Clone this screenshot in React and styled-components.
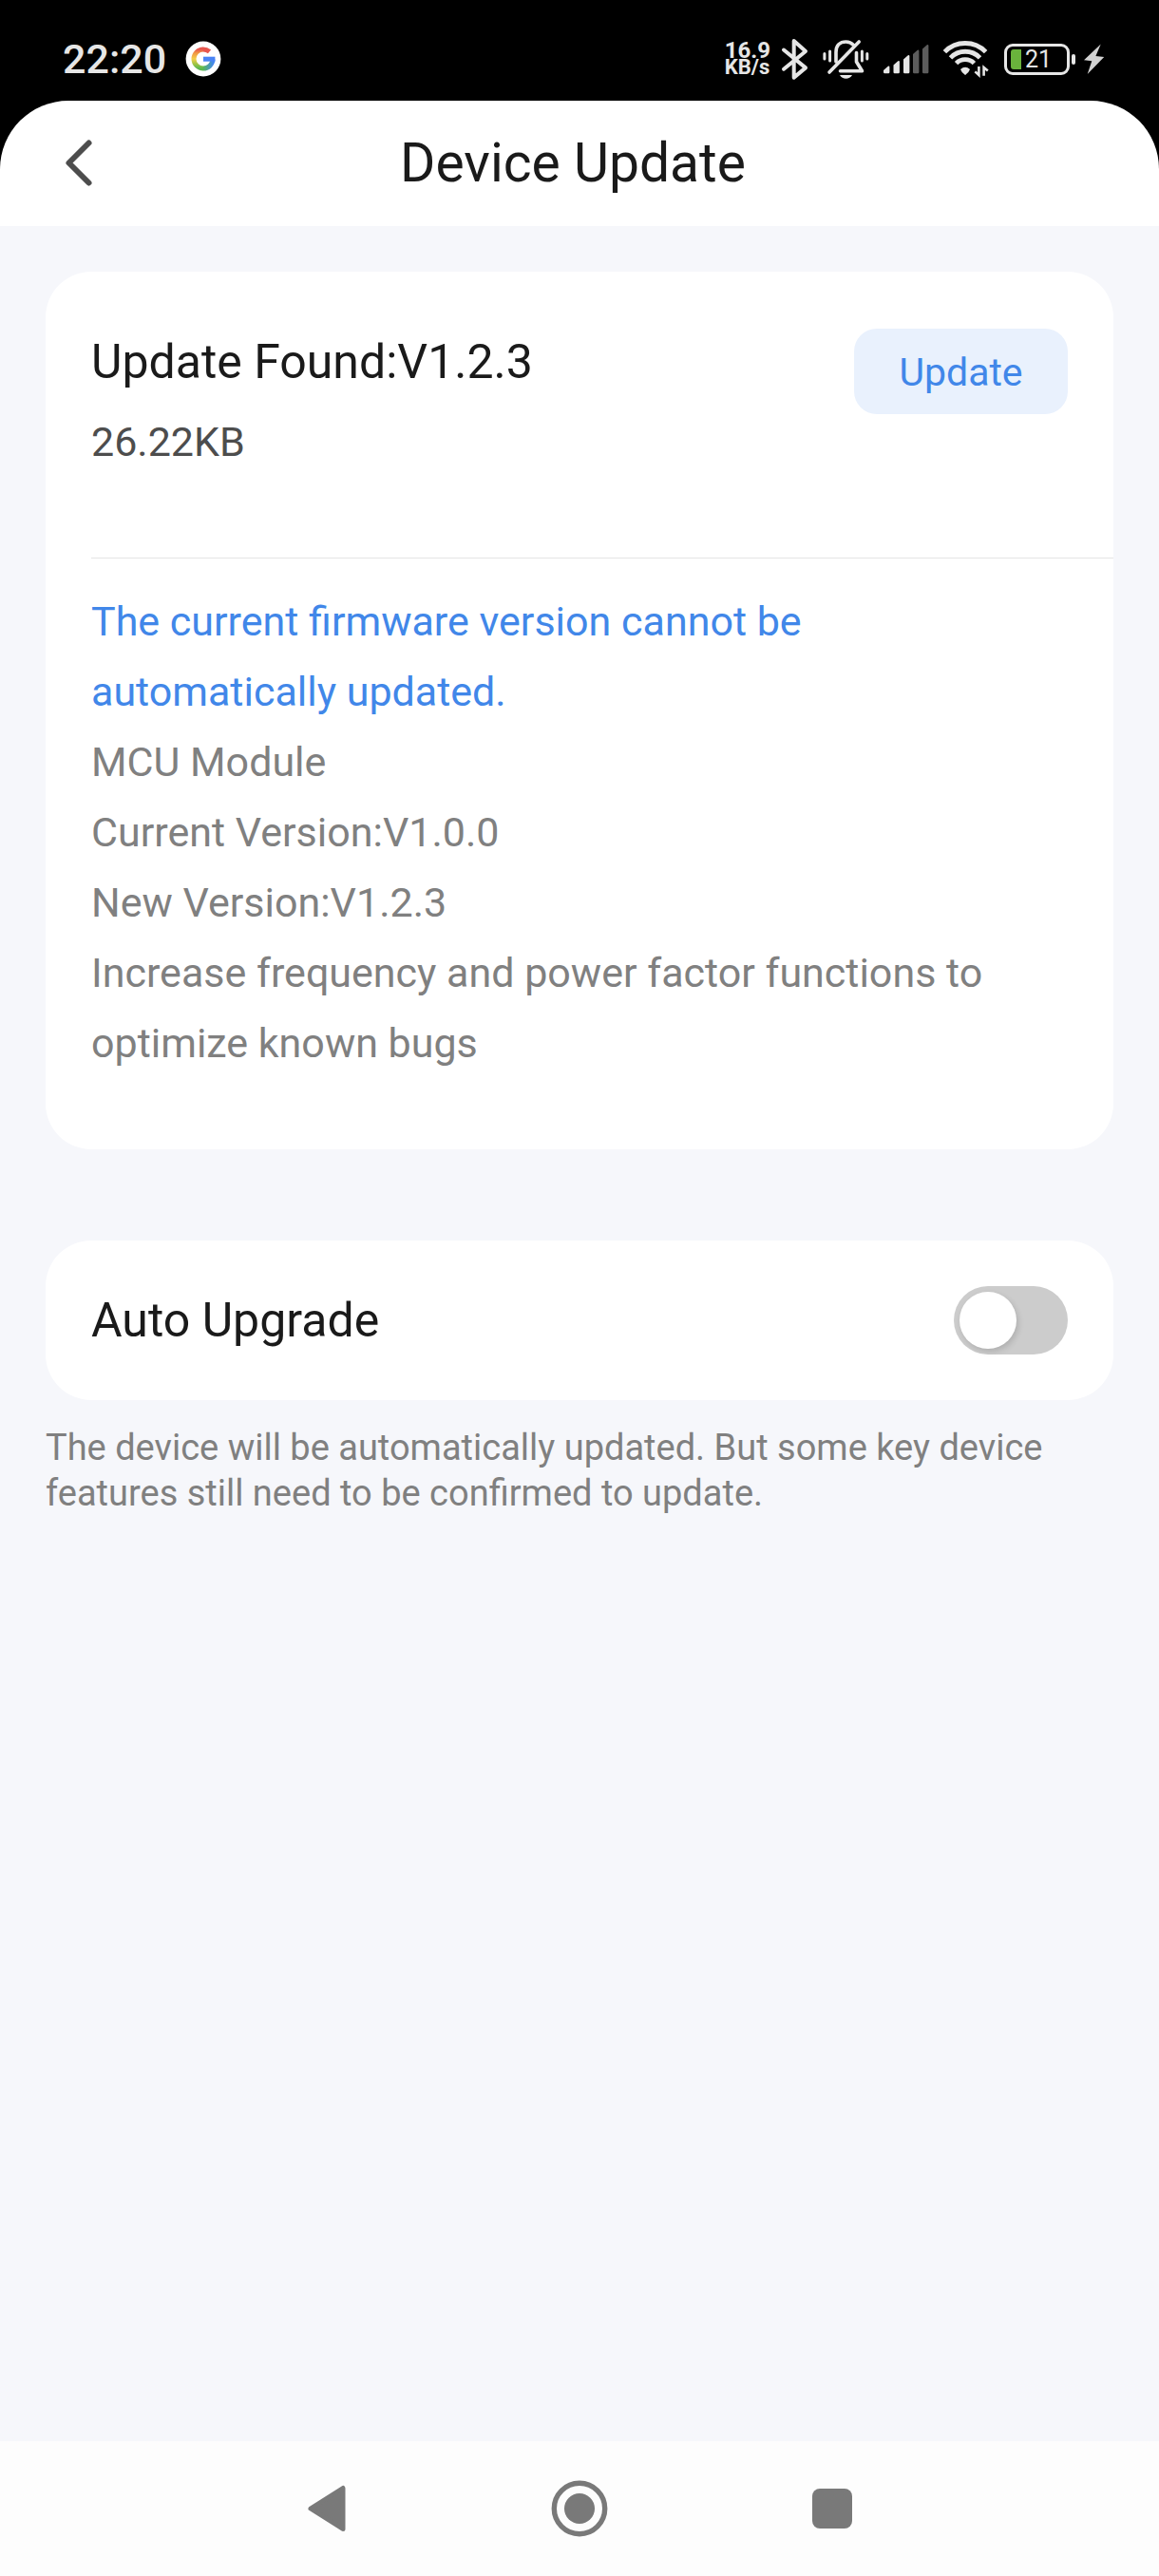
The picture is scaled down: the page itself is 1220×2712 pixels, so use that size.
import React, { useState } from "react";
import styled, { createGlobalStyle } from "styled-components";

const GlobalStyle = createGlobalStyle`
  *, *::before, *::after { box-sizing: border-box; }
  body {
    margin: 0;
    background: #f6f7fb;
    font-family: Roboto, "Noto Sans", sans-serif;
    color: #1a1a1a;
  }
  button { font-family: inherit; border: 0; padding: 0; cursor: pointer; }
  h1, h2, p { margin: 0; font-weight: 400; }
  svg { display: block; flex: none; }
`;

const Screen = styled.div`
  display: flex;
  flex-direction: column;
  min-height: 100vh;
`;

const TopArea = styled.div`
  background: #000;
`;

const StatusBar = styled.div`
  display: flex;
  align-items: center;
  justify-content: space-between;
  height: 106px;
  padding: 18px 56px 0 66px;
  color: #e6e6e6;
`;

const StatusGroup = styled.div`
  display: flex;
  align-items: center;
  gap: ${(p) => p.$gap}px;
`;

const Clock = styled.time`
  font-size: 43px;
  line-height: 48px;
  font-weight: 500;
`;

const NetSpeed = styled.div`
  display: grid;
  font-size: 22px;
  line-height: 18px;
  font-weight: 700;
`;

const NetValue = styled.span`
  font-size: 24px;
`;

const Battery = styled.div`
  display: flex;
  align-items: center;
  width: 75px;
`;

const BatteryBody = styled.div`
  display: flex;
  align-items: center;
  gap: 4px;
  width: 69px;
  height: 33px;
  padding-left: 4px;
  border: 3px solid #e6e6e6;
  border-radius: 9px;
  font-size: 25px;
  line-height: 27px;
`;

const BatteryLevel = styled.span`
  width: 11px;
  height: 21px;
  border-radius: 3px 0 0 3px;
  background: #6ab23c;
`;

const BatteryTip = styled.span`
  width: 4px;
  height: 11px;
  margin-left: 2px;
  border-radius: 2px;
  background: #e6e6e6;
`;

const Header = styled.header`
  display: grid;
  grid-template-columns: 120px 1fr 134px;
  align-items: center;
  height: 132px;
  background: #fff;
  border-radius: 72px 72px 0 0;
`;

const BackButton = styled.button`
  display: flex;
  align-items: center;
  height: 96px;
  padding-left: 66px;
  background: none;
`;

const Title = styled.h1`
  font-size: 57px;
  line-height: 68px;
  text-align: center;
`;

const Content = styled.main`
  flex: 1;
  padding: 48px;
`;

const Card = styled.section`
  background: #fff;
  border-radius: 48px;
`;

const UpdateHead = styled.div`
  display: flex;
  align-items: flex-start;
  justify-content: space-between;
  margin-left: 48px;
  padding: 60px 48px 96px 0;
  border-bottom: 1px solid #e5e5e5;
`;

const UpdateInfo = styled.div`
  display: grid;
  gap: 28px;
  padding-top: 5px;
`;

const RowTitle = styled.h2`
  font-size: 50px;
  line-height: 60px;
`;

const FileSize = styled.p`
  font-size: 43px;
  line-height: 52px;
  color: #4d4d4d;
`;

const UpdateButton = styled.button`
  min-width: 225px;
  height: 90px;
  padding-top: 2px;
  border-radius: 24px;
  background: #e9f1fd;
  color: #4187e9;
  font-size: 41px;
`;

const Notes = styled.div`
  padding: 29px 80px 75px 48px;
  font-size: 43px;
  line-height: 74px;
  color: #808080;
`;

const Notice = styled.p`
  color: #4187e9;
`;

const AutoRow = styled.label`
  display: flex;
  align-items: center;
  justify-content: space-between;
  margin-top: 96px;
  padding: 48px;
  background: #fff;
  border-radius: 48px;
`;

const RowLabel = styled.span`
  font-size: 50px;
  line-height: 60px;
`;

const Toggle = styled.input`
  appearance: none;
  display: flex;
  flex: none;
  width: 120px;
  height: 72px;
  margin: 0;
  padding: 6px;
  border-radius: 36px;
  background: #ccc;

  &::before {
    content: "";
    width: 60px;
    height: 60px;
    border-radius: 50%;
    background: #fff;
    box-shadow: 2px 3px 6px rgba(0, 0, 0, 0.14);
  }
  &:checked { background: #4187e9; justify-content: flex-end; }
`;

const Hint = styled.p`
  margin-top: 26px;
  font-size: 38px;
  line-height: 48px;
  color: #808080;
`;

const NavBar = styled.nav`
  display: flex;
  align-items: center;
  justify-content: center;
  gap: 166px;
  height: 142px;
  background: #fdfdfd;
`;

const NavButton = styled.button`
  display: grid;
  place-items: center;
  width: 100px;
  height: 100px;
  background: none;
`;

function GoogleIcon() {
  return (
    <svg width="38" height="38" viewBox="0 0 38 38" fill="none" strokeWidth="5">
      <defs>
        <linearGradient id="g-left" x1="0" y1="9" x2="0" y2="29" gradientUnits="userSpaceOnUse">
          <stop offset="0" stopColor="#e8574f" />
          <stop offset="0.2" stopColor="#f09a45" />
          <stop offset="0.5" stopColor="#f5cf4a" />
          <stop offset="0.75" stopColor="#a5c544" />
          <stop offset="1" stopColor="#5bb84f" />
        </linearGradient>
        <linearGradient id="g-right" x1="19" y1="0" x2="30" y2="0" gradientUnits="userSpaceOnUse">
          <stop offset="0" stopColor="#57b65a" />
          <stop offset="1" stopColor="#4285f4" />
        </linearGradient>
      </defs>
      <circle cx="19" cy="19" r="18.4" fill="#fff" />
      <path d="M19 9 A10 10 0 0 0 19 29" stroke="url(#g-left)" />
      <path d="M18.8 9 Q22.6 9 25.5 11.4" stroke="#e8574f" />
      <path d="M18.8 29 A10 10 0 0 0 29 19.5" stroke="url(#g-right)" />
      <path d="M19 19.2 H31.4" stroke="#4a84f5" />
    </svg>
  );
}

function BluetoothIcon() {
  return (
    <svg width="36" height="48" viewBox="-1 -1 36 48" fill="none" stroke="#e6e6e6" strokeWidth="4" strokeLinecap="round" strokeLinejoin="round">
      <path d="M5 13.5 L28 32.4 L15.7 42.6 V4 L28 15 L5 33.7" />
    </svg>
  );
}

function MutedBellIcon() {
  return (
    <svg width="56" height="44" viewBox="-3 0 56 44" fill="none" stroke="#e6e6e6" strokeLinecap="round" strokeLinejoin="round">
      <g strokeWidth="3.6">
        <path d="M14 25 V15 C14 8 18 4 24.5 4 C28 4 30.5 5.4 32.5 7.4" />
        <path d="M35.5 15.5 V25 L41.5 34.8 H18.5" />
        <path d="M38.2 4 L7 36" />
      </g>
      <path d="M1.9 16.5 V22 M7.6 14 V24 M41.4 14 V24 M46.8 16.5 V22" strokeWidth="3" />
      <path d="M18 39 H31 C29.5 41.6 27.4 42.8 24.5 42.8 C21.6 42.8 19.5 41.6 18 39 Z" fill="#e6e6e6" stroke="none" />
    </svg>
  );
}

function SignalIcon() {
  const bars = [
    { x: 3, top: 23.5, fill: "#e6e6e6" },
    { x: 13.5, top: 18, fill: "#e6e6e6" },
    { x: 24, top: 12, fill: "#e6e6e6" },
    { x: 34, top: 6.5, fill: "#5c5c5c" },
    { x: 44, top: 1, fill: "#5c5c5c" },
  ];
  return (
    <svg width="54" height="32" viewBox="0 0 54 32">
      {bars.map((b) => (
        <path key={b.x} fill={b.fill} d={`M${b.x} ${b.top + 4.5} L${b.x + 4.8} ${b.top + 0.3} Q${b.x + 6.4} ${b.top - 0.4} ${b.x + 6.4} ${b.top + 1.4} V30 Q${b.x + 6.4} 31.2 ${b.x + 5.2} 31.2 H${b.x + 1.2} Q${b.x} 31.2 ${b.x} 30 Z`} />
      ))}
    </svg>
  );
}

function WifiIcon() {
  return (
    <svg width="60" height="40" viewBox="-1 1 60 40" fill="none" stroke="#e6e6e6">
      <g strokeWidth="4.8">
        <path d="M4.4 13.7 A30 30 0 0 1 47.6 13.7" />
        <path d="M10.5 19.8 A21.6 21.6 0 0 1 41.5 19.8" />
        <path d="M16.6 25.6 A13.2 13.2 0 0 1 35.4 25.6" />
      </g>
      <path d="M21 32 Q26 27.4 31 32 Q30 35.4 26 38 Q22 35.4 21 32 Z" fill="#e6e6e6" stroke="none" />
      <path d="M40.4 29 V38 L36.4 34.4 M45.6 38.8 V30 L49.8 33.4" strokeWidth="2.6" />
    </svg>
  );
}

function BoltIcon() {
  return (
    <svg width="24" height="36" viewBox="0 0 24 36" fill="#d2d2d2">
      <path d="M18.7 2.5 L1 19.3 L9.3 20.3 L4.7 34 L22.2 16 L13.4 15 Z" />
    </svg>
  );
}

export default function App() {
  const [auto, setAuto] = useState(false);
  return (
    <Screen>
      <GlobalStyle />
      <TopArea>
        <StatusBar>
          <StatusGroup $gap={20}>
            <Clock>22:20</Clock>
            <GoogleIcon />
          </StatusGroup>
          <StatusGroup $gap={8}>
            <NetSpeed>
              <NetValue>16.9</NetValue>
              <span>KB/s</span>
            </NetSpeed>
            <BluetoothIcon />
            <MutedBellIcon />
            <SignalIcon />
            <WifiIcon />
            <Battery>
              <BatteryBody>
                <BatteryLevel />
                21
              </BatteryBody>
              <BatteryTip />
            </Battery>
            <BoltIcon />
          </StatusGroup>
        </StatusBar>
        <Header>
          <BackButton aria-label="Back">
            <svg width="34" height="52" viewBox="0 0 34 52" fill="none" stroke="#4d4d4d" strokeWidth="6" strokeLinecap="round" strokeLinejoin="round">
              <path d="M27.5 4.5 L6.5 25.5 L27.5 46.5" />
            </svg>
          </BackButton>
          <Title>Device Update</Title>
        </Header>
      </TopArea>

      <Content>
        <Card>
          <UpdateHead>
            <UpdateInfo>
              <RowTitle>Update Found:V1.2.3</RowTitle>
              <FileSize>26.22KB</FileSize>
            </UpdateInfo>
            <UpdateButton>Update</UpdateButton>
          </UpdateHead>
          <Notes>
            <Notice>The current firmware version cannot be automatically updated.</Notice>
            <p>MCU Module</p>
            <p>Current Version:V1.0.0</p>
            <p>New Version:V1.2.3</p>
            <p>Increase frequency and power factor functions to optimize known bugs</p>
          </Notes>
        </Card>

        <AutoRow>
          <RowLabel>Auto Upgrade</RowLabel>
          <Toggle type="checkbox" checked={auto} onChange={(e) => setAuto(e.target.checked)} />
        </AutoRow>
        <Hint>
          The device will be automatically updated. But some key device features still need to be confirmed to update.
        </Hint>
      </Content>

      <NavBar>
        <NavButton aria-label="Back">
          <svg width="42" height="52" viewBox="0 0 42 52" fill="#797979" stroke="#797979" strokeWidth="5" strokeLinejoin="round">
            <path d="M38 4.5 V47.5 L4 26 Z" />
          </svg>
        </NavButton>
        <NavButton aria-label="Home">
          <svg width="60" height="60" viewBox="0 0 60 60">
            <circle cx="30" cy="30" r="26.7" fill="none" stroke="#797979" strokeWidth="5.4" />
            <circle cx="30" cy="30" r="16" fill="#797979" />
          </svg>
        </NavButton>
        <NavButton aria-label="Recent apps">
          <svg width="44" height="44" viewBox="0 0 44 44">
            <rect x="1" y="1" width="42" height="42" rx="8" fill="#797979" />
          </svg>
        </NavButton>
      </NavBar>
    </Screen>
  );
}
